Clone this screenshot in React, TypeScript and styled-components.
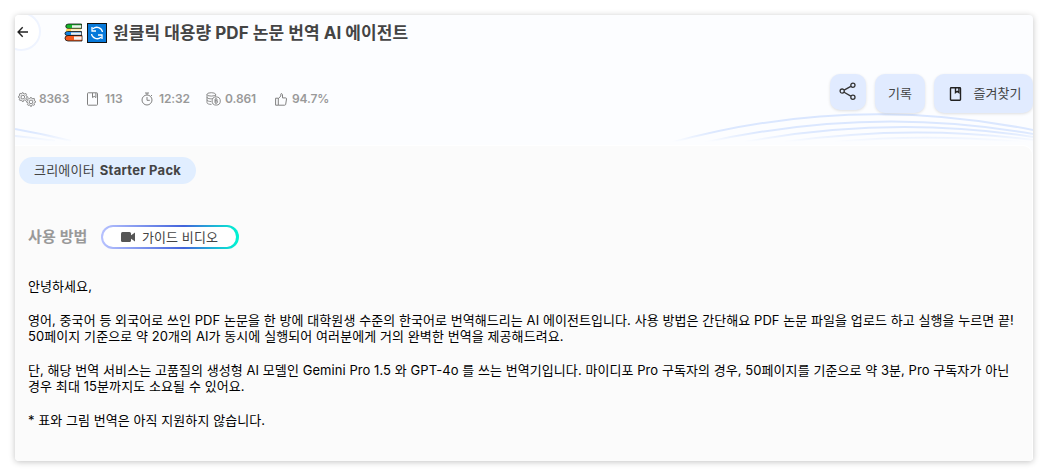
import React from 'react'
import styled, { createGlobalStyle } from 'styled-components'

const GlobalStyle = createGlobalStyle`
  * {
    box-sizing: border-box;
  }
  body {
    margin: 0;
    background: #fff;
    font-family: Inter, 'Noto Sans CJK KR', sans-serif;
    color: #444;
  }
  button {
    font-family: inherit;
    color: inherit;
    border: 0;
    padding: 0;
  }
  svg {
    display: block;
    flex-shrink: 0;
  }
`

const Page = styled.div`
  height: 476px;
  padding: 15px;
  overflow: hidden;
`

const Card = styled.main`
  width: 1018px;
  height: 446px;
  display: flex;
  flex-direction: column;
  overflow: hidden;
  border-radius: 4px;
  background: #fcfdff;
  box-shadow: 0 1px 6px rgba(0, 0, 0, 0.24);
`

const Header = styled.header`
  position: relative;
  height: 130px;
  flex-shrink: 0;
`

const Waves = styled.svg`
  position: absolute;
  left: 0;
  bottom: 0;
`

const TitleRow = styled.div`
  display: flex;
  height: 36px;
  align-items: center;
`

const BackButton = styled.button`
  width: 39px;
  height: 39px;
  margin: -3px 0 0 -13px;
  padding-left: 13px;
  border-radius: 50%;
  border: 2px solid #eff4ff;
  background: #fff;
`

const TitleIcons = styled.div`
  display: flex;
  gap: 4px;
  margin-left: 23px;
`

const Title = styled.h1`
  margin: 0 0 0 6px;
  font-size: 17px;
  font-weight: 700;
  line-height: 24px;
  letter-spacing: 0.05px;
  white-space: nowrap;
`

const InfoRow = styled.div`
  position: relative;
  display: flex;
  justify-content: space-between;
  margin-top: 23px;
`

const Stats = styled.ul`
  display: flex;
  list-style: none;
  margin: 16px 0 0 3px;
  padding: 0;
`

const Stat = styled.li<{ $width: number; $gap: number }>`
  display: flex;
  align-items: center;
  width: ${({ $width }) => $width}px;
  height: 18px;
  gap: ${({ $gap }) => $gap}px;
  font-size: 12px;
  font-weight: 600;
  line-height: 16px;
  letter-spacing: -0.1px;
  color: #999;
`

const Actions = styled.div`
  display: flex;
  align-items: flex-start;
  gap: 9px;
`

const ActionButton = styled.button<{ $width: number; $height?: number; $indent?: number }>`
  display: flex;
  align-items: center;
  justify-content: center;
  gap: 10px;
  width: ${({ $width }) => $width}px;
  height: ${({ $height = 39 }) => $height}px;
  padding-left: ${({ $indent = 0 }) => $indent}px;
  border-radius: 10px;
  background: #e1ebff;
  box-shadow: 0 1px 3px rgba(0, 0, 0, 0.12);
  font-size: 13px;
  letter-spacing: 0.1px;
  white-space: nowrap;
`

const ActionLabel = styled.span`
  padding-bottom: 3px;
`

const Body = styled.section`
  flex: 1;
  padding: 11px 0 0 4px;
  border-top: 1px solid #fff;
  border-right: 1px solid #fff;
  border-top-right-radius: 10px;
  background: #fbfbfb;
`

const CreatorBadge = styled.div`
  display: flex;
  align-items: center;
  gap: 5px;
  width: 177px;
  height: 27px;
  padding: 0 0 2px 15px;
  border-radius: 14px;
  background: #e1eeff;
  font-size: 13px;
  letter-spacing: 0.26px;
  white-space: nowrap;
`

const CreatorLabel = styled.span`
  letter-spacing: 0.2px;
`

const GuideRow = styled.div`
  display: flex;
  align-items: center;
  height: 24px;
  margin: 41px 0 0 9px;
`

const GuideTitle = styled.h2`
  margin: 0;
  padding-bottom: 3px;
  width: 73px;
  font-size: 15px;
  font-weight: 600;
  letter-spacing: 0.1px;
  color: #999;
`

const GuideButton = styled.button`
  display: flex;
  align-items: center;
  justify-content: center;
  gap: 7px;
  width: 138px;
  height: 24px;
  border: 2px solid transparent;
  border-right-width: 3px;
  border-radius: 12px;
  background:
    linear-gradient(#fff, #fff) padding-box,
    linear-gradient(90deg, #b7c2ff, #4263db 60%, #00f6d2) border-box;
  font-size: 13px;
  letter-spacing: 0.1px;
`

const GuideLabel = styled.span`
  padding-bottom: 2px;
`

const Description = styled.div`
  display: flex;
  flex-direction: column;
  gap: 17px;
  margin: 29px 0 0 9px;
  font-size: 13px;
  line-height: 16.6px;
  color: #000;
`

const Paragraph = styled.p`
  margin: 0;
`

const Line = styled.span<{ $spacing: number }>`
  display: block;
  white-space: nowrap;
  letter-spacing: ${({ $spacing }) => $spacing}px;
`

const GEAR =
  'M7 1l1 2 2 .2 1.6-.9 1.1 1.3-1 1.6.6 1.6 1.8.6v1.8l-1.9.7-.6 1.5.9 1.8-1.3 1.1-1.7-1-1.6.6L7.3 16H5.6l-.7-2-1.6-.6-1.7 1L.4 13l1-1.7-.6-1.7L-1 9V7.2l1.9-.6.6-1.6-.9-1.7 1.3-1.2 1.7.9 1.5-.5L5.6 1z'

const GearsIcon = () => (
  <svg width="18" height="15" viewBox="0 0 18 15" fill="none" stroke="#808080">
    <g transform="translate(1 .1) scale(.59)" strokeWidth="1.6">
      <path d={GEAR} />
      <circle cx="6.5" cy="8.5" r="3.1" />
    </g>
    <g transform="translate(9.2 4.9) scale(.59)" strokeWidth="1.6">
      <path d={GEAR} fill="#fcfdff" />
      <circle cx="6.5" cy="8.5" r="3.1" />
    </g>
  </svg>
)

const BookmarkIcon = ({ size, color, strokeWidth }: { size: number; color: string; strokeWidth: number }) => (
  <svg width={size} height={size} viewBox="0 0 14 14" fill="none" stroke={color} strokeWidth={strokeWidth}>
    <rect x="1.5" y=".8" width="10" height="12.4" rx=".7" />
    <path d="M6.5 1v4.6l1.7-1.3 1.7 1.3V1" />
  </svg>
)

const TimerIcon = () => (
  <svg width="12" height="14" viewBox="0 0 12 14" fill="none" stroke="#808080">
    <circle cx="6" cy="8" r="5" />
    <path d="M4 1h4M6 1v2M6 5v3.3h2.8M10 3l1 1" />
  </svg>
)

const CoinsIcon = () => (
  <svg width="15" height="14" viewBox="0 0 15 14" fill="none" stroke="#808080" strokeWidth=".9">
    <ellipse cx="5.3" cy="2.4" rx="4.3" ry="1.7" />
    <path d="M1 2.4v8.2c0 1.1 2 1.8 4.5 1.8M9.6 2.4v2.2M1 5.1c0 2 5.8 2.3 8 .7M1 7.8c0 1.2 2 1.7 4.3 1.7" />
    <circle cx="10.2" cy="9" r="4.1" fill="#fcfdff" />
    <path d="M9 7.1v3.8h1.6a1 1 0 0 0 0-2H9h1.4a.9.9 0 0 0 0-1.8zM10 6.1v1M10 11v1" />
  </svg>
)

const ThumbIcon = () => (
  <svg width="12" height="13" viewBox="0 0 12 13" fill="none" stroke="#808080" strokeLinejoin="round">
    <path d="M.6 5.2h2.7v7H.6zM3.3 5.7L5.8 3V1.2c0-1 1.7-.7 1.7.7v3h3.1c.7 0 1 .5.9 1.1l-.8 5.3c-.1.6-.5.9-1 .9H3.3" />
  </svg>
)

const BackIcon = () => (
  <svg width="12" height="12" viewBox="0 0 12 12" fill="none" stroke="#222" strokeWidth="1.4">
    <path d="M11 6H1.2M5.7 1.3L1.1 6l4.6 4.7" />
  </svg>
)

const ShareIcon = () => (
  <svg width="18" height="20" viewBox="0 0 18 20" fill="none" stroke="#333" strokeWidth="1.3">
    <path d="M5.1 8.1l6.7-3.7M5.1 10.2l6.7 3.9" />
    <circle cx="3.2" cy="9.1" r="2.1" />
    <circle cx="13.9" cy="3.2" r="2.1" />
    <circle cx="13.9" cy="15.2" r="2.1" />
  </svg>
)

const CameraIcon = () => (
  <svg width="14" height="10" viewBox="0 0 14 10" fill="#555">
    <rect width="10" height="10" rx="1.5" />
    <path d="M9 4l5-3.5v9L9 6z" />
  </svg>
)

const BooksIcon = () => (
  <svg width="19" height="19" viewBox="0 0 19 19" stroke="#111" strokeWidth=".8">
    <path d="M17.5 1H4.5Q1.8 1 1.8 3.2T4 5.5h13.5z" fill="#16b52b" />
    <path d="M17.2 2.2H8v2.6h9.2z" fill="#eee" stroke="none" />
    <path d="M16.8 5.8H4Q2 5.8 2 7.2t2 1.4h12.8z" fill="#ffd45c" stroke="none" />
    <path d="M7 6.4h9.8v1.4H7z" fill="#fff" stroke="none" />
    <path d="M17.5 8.5H3.5Q1 8.5 1 10.5t2.5 2h14z" fill="#1683dc" />
    <path d="M17.2 9.4H7v2.3h10.2z" fill="#eee" stroke="none" />
    <path d="M18 12.5H4Q1 12.5 1 15.2T4 18h14z" fill="#f4591b" />
    <path d="M17.6 13.6H10v3.2h7.6z" fill="#eee" stroke="none" />
  </svg>
)

const RefreshIcon = () => (
  <svg width="20" height="20" viewBox="0 0 20 20" fill="none">
    <rect x=".5" y=".5" width="19" height="19" fill="#0779da" stroke="#111" />
    <path d="M6 5.8a5.7 5.7 0 0 1 9.5 3.2M14 14.2A5.7 5.7 0 0 1 4.5 11M5 4v4h4M15 16v-4h-4" stroke="#fff" strokeWidth="1.3" />
  </svg>
)

const STATS = [
  { icon: <GearsIcon />, value: '8363', width: 68, gap: 3 },
  { icon: <BookmarkIcon size={14} color="#808080" strokeWidth={1} />, value: '113', width: 55, gap: 5 },
  { icon: <TimerIcon />, value: '12:32', width: 65, gap: 6 },
  { icon: <CoinsIcon />, value: '0.861', width: 69, gap: 4 },
  { icon: <ThumbIcon />, value: '94.7%', width: 60, gap: 5 }
]

const PARAGRAPHS = [
  [{ text: '안녕하세요,', spacing: 0.07 }],
  [
    {
      text: '영어, 중국어 등 외국어로 쓰인 PDF 논문을 한 방에 대학원생 수준의 한국어로 번역해드리는 AI 에이전트입니다. 사용 방법은 간단해요 PDF 논문 파일을 업로드 하고 실행을 누르면 끝!',
      spacing: 0.065
    },
    { text: '50페이지 기준으로 약 20개의 AI가 동시에 실행되어 여러분에게 거의 완벽한 번역을 제공해드려요.', spacing: 0.08 }
  ],
  [
    {
      text: '단, 해당 번역 서비스는 고품질의 생성형 AI 모델인 Gemini Pro 1.5 와 GPT-4o 를 쓰는 번역기입니다. 마이디포 Pro 구독자의 경우, 50페이지를 기준으로 약 3분, Pro 구독자가 아닌',
      spacing: 0.065
    },
    { text: '경우 최대 15분까지도 소요될 수 있어요.', spacing: 0.09 }
  ],
  [{ text: '* 표와 그림 번역은 아직 지원하지 않습니다.', spacing: 0.06 }]
]

const App = () => {
  return (
    <Page>
      <GlobalStyle />
      <Card>
        <Header>
          <Waves width="1018" height="32" viewBox="0 0 1018 32" fill="none">
            <defs>
              <linearGradient id="fade" x1="0" y1="0" x2="0" y2="32" gradientUnits="userSpaceOnUse">
                <stop offset="0" stopColor="#d9e6ff" />
                <stop offset=".6" stopColor="#dce8ff" />
                <stop offset=".9" stopColor="#fcfdff" />
              </linearGradient>
            </defs>
            <g stroke="url(#fade)" strokeWidth="2">
              <path d="M0 16Q28 21 56 28M0 23Q20 25 40 28" />
              <path d="M655 30Q835-20 1018 17" />
              <path d="M688 30Q855-8 1018 21" />
              <path d="M730 29Q875 2 1018 24" />
              <path d="M770 29Q895 11 1018 27" />
              <path d="M820 29Q915 20 1018 30" />
            </g>
          </Waves>
          <TitleRow>
            <BackButton aria-label="back">
              <BackIcon />
            </BackButton>
            <TitleIcons>
              <BooksIcon />
              <RefreshIcon />
            </TitleIcons>
            <Title>원클릭 대용량 PDF 논문 번역 AI 에이전트</Title>
          </TitleRow>
          <InfoRow>
            <Stats>
              {STATS.map((stat) => (
                <Stat key={stat.value} $width={stat.width} $gap={stat.gap}>
                  {stat.icon}
                  <span>{stat.value}</span>
                </Stat>
              ))}
            </Stats>
            <Actions>
              <ActionButton $width={36} $height={36} aria-label="share">
                <ShareIcon />
              </ActionButton>
              <ActionButton $width={50}>
                <ActionLabel>기록</ActionLabel>
              </ActionButton>
              <ActionButton $width={99} $indent={4}>
                <BookmarkIcon size={14} color="#222" strokeWidth={1.4} />
                <ActionLabel>즐겨찾기</ActionLabel>
              </ActionButton>
            </Actions>
          </InfoRow>
        </Header>
        <Body>
          <CreatorBadge>
            <CreatorLabel>크리에이터</CreatorLabel>
            <b>Starter Pack</b>
          </CreatorBadge>
          <GuideRow>
            <GuideTitle>사용 방법</GuideTitle>
            <GuideButton>
              <CameraIcon />
              <GuideLabel>가이드 비디오</GuideLabel>
            </GuideButton>
          </GuideRow>
          <Description>
            {PARAGRAPHS.map((lines, idx) => (
              <Paragraph key={idx}>
                {lines.map((line) => (
                  <Line key={line.text} $spacing={line.spacing}>
                    {line.text}
                  </Line>
                ))}
              </Paragraph>
            ))}
          </Description>
        </Body>
      </Card>
    </Page>
  )
}

export default App
